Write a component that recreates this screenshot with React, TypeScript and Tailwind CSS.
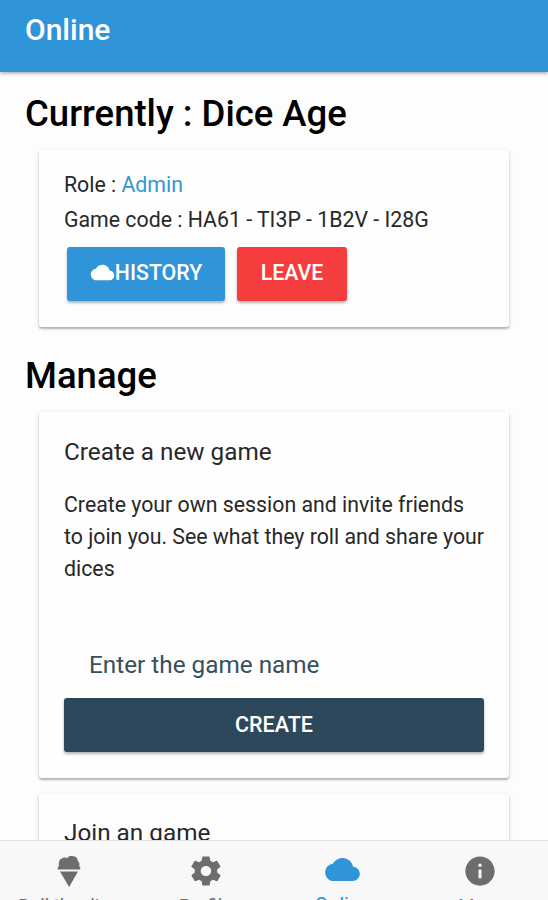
import { ReactNode } from 'react';
import { IoMdCloud, IoMdSettings, IoMdInformationCircle } from 'react-icons/io';

const tabs = [
  { label: 'Roll the dice', icon: 'cone' },
  { label: 'Profile', icon: 'settings' },
  { label: 'Online', icon: 'cloud' },
  { label: 'More', icon: 'info' },
];

const IceCream = () => (
  <svg width="24" height="34" viewBox="0 0 24 34" fill="currentColor">
    <path d="M.8 15.500V13.500L2 12.200C1.300 8 2.500 4.600 6 3.900 7.500 3.300 9 3.600 10 4.300 11.500 2.200 13.500 1.800 16 2.300 19 2.300 20.800 4.500 20.800 7 22.600 8.600 22.800 10.500 22.200 12.200L23.300 13.500V15.500Z" />
    <path d="M3 17.500H21L12.100 33Z" />
  </svg>
);

const TabIcon = ({ name }: { name: string }) => {
  if (name === 'cone') return <IceCream />;
  if (name === 'settings') return <IoMdSettings size={36} />;
  if (name === 'cloud') return <IoMdCloud size={37} className="mb-[4px]" />;
  return <IoMdInformationCircle size={36} />;
};

const Card = ({ className, children }: { className: string; children: ReactNode }) => (
  <section
    className={`mx-[39px] rounded-[3px] bg-[#fefefe] px-[25px] text-[#282828] shadow-[0_2px_2px_rgba(0,0,0,0.24),0_1px_4px_rgba(0,0,0,0.12)] ${className}`}
  >
    {children}
  </section>
);

export default function App() {
  return (
    <div className="flex h-[900px] w-[548px] flex-col overflow-hidden bg-[#fdfdfd] font-['Roboto',sans-serif]">
      <header className="z-10 h-[72px] shrink-0 bg-[#2f95d8] px-[25px] pt-[12px] shadow-[0_1px_4px_rgba(0,0,0,0.4)]">
        <h1 className="text-[30px] leading-[36px] font-medium text-white">Online</h1>
      </header>

      <main className="min-h-0 flex-1 overflow-hidden">
        <h2 className="h-[78px] px-[25px] pt-[20px] text-[36.5px] leading-[43px] font-medium text-black">
          Currently : Dice Age
        </h2>
        <Card className="h-[177px] pt-[17px]">
          <p className="text-[21.3px] leading-[35px]">
            Role : <span className="text-[#3498cf]">Admin</span>
          </p>
          <p className="text-[21.3px] leading-[35px]">Game code : HA61 - TI3P - 1B2V - I28G</p>
          <div className="mt-[10px] flex gap-[12px] pl-[3px] text-[21.3px] font-medium text-white">
            <button className="flex h-[54px] w-[158px] items-center justify-center rounded-[3px] bg-[#2f95d8] pb-[2px] shadow-[0_2px_3px_rgba(0,0,0,0.3)]">
              <IoMdCloud size={25} className="mb-[2px]" />
              HISTORY
            </button>
            <button className="h-[54px] w-[110px] rounded-[3px] bg-[#f53d3d] pb-[2px] shadow-[0_2px_3px_rgba(0,0,0,0.3)]">LEAVE</button>
          </div>
        </Card>

        <h2 className="h-[85px] px-[25px] pt-[28px] text-[36.5px] leading-[42px] font-medium text-black">Manage</h2>
        <Card className="h-[366px] pt-[24px]">
          <h3 className="text-[24.3px] leading-[32px]">Create a new game</h3>
          <p className="mt-[21px] text-[21.3px] leading-[32px] whitespace-nowrap">
            Create your own session and invite friends
            <br />
            to join you. See what they roll and share your
            <br />
            dices
          </p>
          <div className="mt-[64px] pl-[25px] text-[24.3px] leading-[32px] text-[#35505f]">Enter the game name</div>
          <button className="mt-[17px] h-[54px] w-full rounded-[3px] bg-[#2e485b] text-[21.5px] font-medium text-white shadow-[0_2px_3px_rgba(0,0,0,0.3)]">
            CREATE
          </button>
        </Card>

        <Card className="mt-[16px] h-[200px] pt-[23px]">
          <h3 className="text-[24.3px] leading-[32px]">Join an game</h3>
        </Card>
      </main>

      <nav className="z-10 grid h-[60px] shrink-0 grid-cols-4 border-t border-[#e2e2e2] bg-[#f8f8f8]">
        {tabs.map((tab) => (
          <div
            key={tab.label}
            className={`flex flex-col items-center overflow-hidden pt-[12px] ${tab.icon === 'cloud' ? 'text-[#2f95d8]' : 'text-[#6d6d6d]'}`}
          >
            <div className="flex h-[36px] shrink-0 items-center">
              <TabIcon name={tab.icon} />
            </div>
            <span
              className={`shrink-0 leading-[26px] whitespace-nowrap ${tab.icon === 'cloud' ? 'mt-[3px] text-[20px]' : 'mt-[4px] text-[18.5px]'}`}
            >
              {tab.label}
            </span>
          </div>
        ))}
      </nav>
    </div>
  );
}
